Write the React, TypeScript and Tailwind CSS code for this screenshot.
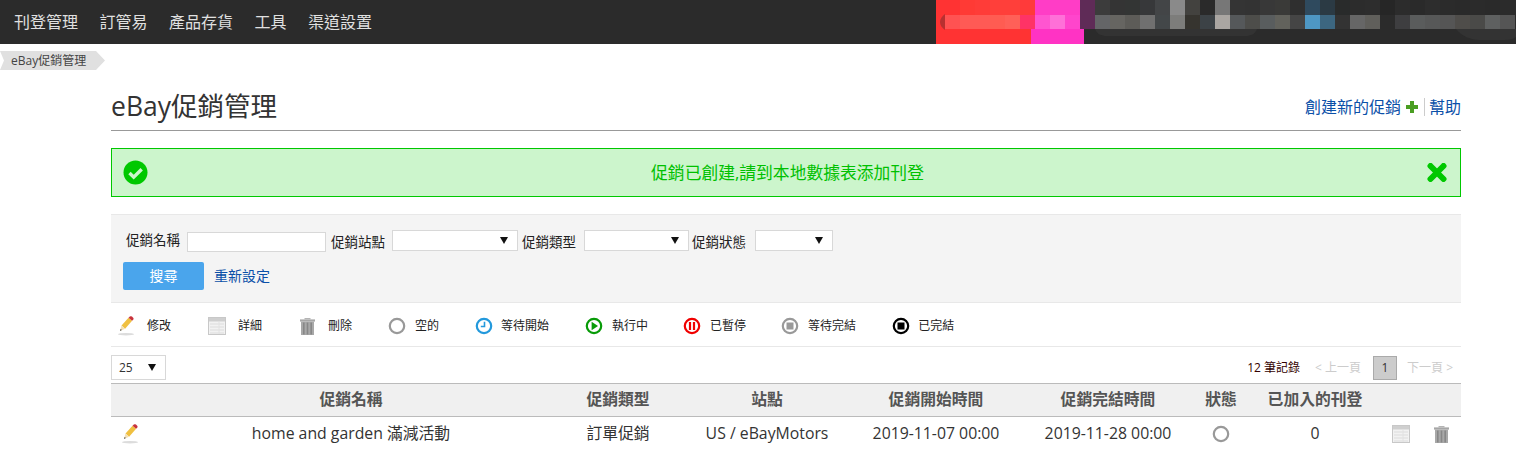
import { FC, ReactNode } from 'react';

const FONT = "font-['Open_Sans','Noto_Sans_CJK_TC',sans-serif]";

const navItems = ['刊登管理', '訂管易', '產品存貨', '工具', '渠道設置'];

// pixelated block over the account name in the top bar
const mosaicTop = ['#3c3c3c', '#343434', '#333534', '#37383a', '#434547', '#8a8a8a', '#43423f', '#2a2a2a', '#777777', '#343434', '#333333', '#383838', '#3a3a38', '#2f2f2f', '#2f4a5e', '#2b3a44', '#292b2b', '#2c2c2c', '#2d2d2d', '#262626', '#2c2c2c', '#2a2a2a', '#2d2d2d', '#2b2b2b', '#2a2a2a', '#2b2b2b', '#2a2a2a', '#2b2b2b'];
const mosaicMid = ['#646567', '#666561', '#5d5c58', '#707070', '#434749', '#7d7d7b', '#36342f', '#3c4246', '#aaa6a2', '#55585a', '#4d4d4a', '#595d5e', '#62625c', '#454545', '#4e97c4', '#3c6680', '#333333', '#666666', '#605f5b', '#2b2b2b', '#3e3e40', '#5a5c5c', '#575858', '#555555', '#4f4d4a', '#4a4a48', '#5e6060', '#555555'];
const redTop = ['#ff3333', '#ff3a35', '#ff3c38', '#ff3f3a', '#ff3f3a', '#ff3a3a'];
const redMid = ['#ff5252', '#ff5a55', '#ff5a55', '#ff5c52', '#ff6058', '#ff3366'];

const Mosaic: FC = () => (
  <svg width="580" height="44" viewBox="0 0 580 44" className="block shrink-0">
    <rect x="0" y="0" width="99" height="44" fill="#ff3333" />
    <path d="M9 15h90v14H9z" fill="#ff5252" />
    {redTop.map((c, i) => <rect key={i} x={9 + i * 15} y="0" width="15" height="15" fill={c} />)}
    {redMid.map((c, i) => <rect key={i} x={9 + i * 15} y="15" width="15" height="14" fill={c} />)}
    <path d="M9 14v16c-3-2-5-5-5-8s2-6 5-8z" fill="#b83030" />
    <rect x="95" y="29" width="53" height="15" fill="#ff33c4" />
    <rect x="99" y="0" width="45" height="15" fill="#ff3dc6" />
    <rect x="99" y="15" width="15" height="14" fill="#ff55d0" />
    <rect x="114" y="15" width="15" height="14" fill="#ff70d8" />
    <rect x="129" y="15" width="15" height="14" fill="#ff45cc" />
    <rect x="144" y="0" width="15" height="29" fill="#5f2b57" />
    <path d="M159 29h162c-2 5-6 7-12 7H171c-6 0-10-2-12-7z" fill="#333333" />
    <path d="M520 29h60v8c-2 2-6 3-12 3h-24c-10 0-18-4-24-11z" fill="#333333" />
    {mosaicTop.map((c, i) => <rect key={i} x={159 + i * 15} y="0" width="15" height="15" fill={c} />)}
    {mosaicMid.map((c, i) => <rect key={i} x={159 + i * 15} y="15" width="15" height="14" fill={c} />)}
  </svg>
);

const PencilIcon: FC = () => (
  <svg width="18" height="20" viewBox="0 0 18 20" className="block">
    <ellipse cx="8" cy="18.2" rx="8" ry="1.2" fill="#dcdcdc" />
    <path d="M3.5 9.5 10.5 1.8l3.6 3-7 7.9z" fill="#f0c040" />
    <path d="M10.5 1.8 12 .5c.6-.5 1.3-.4 1.8 0l1.4 1.2c.5.5.5 1.2.1 1.7l-1.2 1.4z" fill="#c8323c" />
    <path d="m3.5 9.5 3.6 3.2-5.1 2.3z" fill="#f3dfb4" />
    <path d="m2.6 13-.6 2 1.9-.9z" fill="#444444" />
  </svg>
);

const DetailIcon: FC = () => (
  <svg width="18" height="18" viewBox="0 0 18 18" className="block">
    <rect x="0.5" y="0.5" width="17" height="17" fill="#f2f2f2" stroke="#c8c8c8" />
    <rect x="1" y="1" width="16" height="3.5" fill="#cfcfcf" />
    <path d="M2 7h14M2 10h14M2 13h14M2 16h14" stroke="#dcdcdc" />
    <path d="M11 5v12" stroke="#e2e2e2" />
  </svg>
);

const TrashIcon: FC = () => (
  <svg width="17" height="18" viewBox="0 0 17 18" className="block">
    <path d="M1 2.4h15v2.2H1z" fill="#a6a6a6" />
    <path d="M5.5 2.4V1h6v1.4z" fill="#b4b4b4" />
    <path d="M2 4.6h13V18H2z" fill="#a8a8a8" />
    <path d="M4.8 5.5v12M8.5 5.5v12M12.2 5.5v12" stroke="#878787" strokeWidth="1.6" />
  </svg>
);

type Status = 'empty' | 'waiting' | 'running' | 'paused' | 'ending' | 'ended';

const statusColors: Record<Status, string> = {
  empty: '#999999',
  waiting: '#2399dc',
  running: '#089b08',
  paused: '#f00000',
  ending: '#999999',
  ended: '#000000',
};

const StatusIcon: FC<{ status: Status }> = ({ status }) => {
  const color = statusColors[status];
  return (
    <svg width="18" height="18" viewBox="0 0 18 18" className="block">
      <circle cx="9" cy="9" r="7.2" fill="#ffffff" stroke={color} strokeWidth="2.2" />
      {status === 'waiting' && <path d="M9.5 4.8v4.7H5.8" fill="none" stroke={color} strokeWidth="1.6" />}
      {status === 'running' && <path d="M6.6 4.8 13 9l-6.4 4.2z" fill={color} />}
      {status === 'paused' && <path d="M7 5v8M11 5v8" stroke={color} strokeWidth="2.2" />}
      {(status === 'ending' || status === 'ended') && <rect x="5.5" y="5.5" width="7" height="7" fill={color} />}
    </svg>
  );
};

const legend: { label: string; icon: ReactNode; gap: string; tail?: string }[] = [
  { label: '修改', icon: <PencilIcon />, gap: 'gap-[11px]' },
  { label: '詳細', icon: <DetailIcon />, gap: 'gap-[12px]' },
  { label: '刪除', icon: <TrashIcon />, gap: 'gap-[12px]', tail: '-mr-px' },
  { label: '空的', icon: <StatusIcon status="empty" />, gap: 'gap-[9px]', tail: '-mr-px' },
  { label: '等待開始', icon: <StatusIcon status="waiting" />, gap: 'gap-[8px]', tail: '-mr-px' },
  { label: '執行中', icon: <StatusIcon status="running" />, gap: 'gap-[9px]', tail: '-mr-[2px]' },
  { label: '已暫停', icon: <StatusIcon status="paused" />, gap: 'gap-[9px]', tail: '-mr-[2px]' },
  { label: '等待完結', icon: <StatusIcon status="ending" />, gap: 'gap-[9px]', tail: '-mr-px' },
  { label: '已完結', icon: <StatusIcon status="ended" />, gap: 'gap-[8px]' },
];

const SelectBox: FC<{ className: string; value?: string }> = ({ className, value }) => (
  <div className={`flex items-center justify-between bg-white border border-[#d8d8d8] ${className}`}>
    <span>{value}</span>
    <svg width="8" height="7" viewBox="0 0 8 7"><path d="M0 0h8L4 7z" fill="#111111" /></svg>
  </div>
);

const Label: FC<{ children: ReactNode }> = ({ children }) => (
  <span className="text-[13.5px] text-[#222] whitespace-nowrap">{children}</span>
);

const headers = ['', '促銷名稱', '促銷類型', '站點', '促銷開始時間', '促銷完結時間', '狀態', '已加入的刊登', '', ''];

const App: FC = () => {
  return (
    <div className={`${FONT} h-[451px] overflow-hidden bg-white text-[#333]`}>
      <header className="flex h-11 items-center justify-between bg-[#2b2b2b] pl-[14px]">
        <nav className="flex gap-[21.5px] text-base text-[#e0e0e0]">
          {navItems.map((item) => <a key={item}>{item}</a>)}
        </nav>
        <Mosaic />
      </header>

      <div className="mt-[7px] flex h-[19px] w-[105px] items-center bg-[#e0e0e0] pl-[11px] text-xs text-[#444] [clip-path:polygon(0_0,96px_0,105px_50%,96px_100%,0_100%,4px_50%)]">
        eBay促銷管理
      </div>

      <main className="ml-[111px] mr-[55px]">
        <div className="mt-[20px] flex h-[41px] items-center justify-between border-b border-[#999] pb-[6px]">
          <h1 className="text-[26.5px] text-[#333]">eBay促銷管理</h1>
          <div className="flex items-center text-base text-[#0b50a8]">
            <a>創建新的促銷</a>
            <svg width="12" height="12" viewBox="0 0 12 12" className="ml-[5px] mr-[6px]"><path d="M4 0h4v4h4v4H8v4H4V8H0V4h4z" fill="#4a9e22" /></svg>
            <a className="border-l border-[#ccc] pl-1 leading-[18px]">幫助</a>
          </div>
        </div>

        <div className="mt-[17px] flex h-[49px] items-center border border-[#00c800] bg-[#ccf5cc] pl-[11px] pr-[13px] text-[#00c000]">
          <svg width="25" height="25" viewBox="0 0 25 25" className="shrink-0">
            <circle cx="12.5" cy="12.5" r="12" fill="#00c800" />
            <path d="m6.5 13 4.2 4.2 8-8" fill="none" stroke="#ccf5cc" strokeWidth="3.4" />
          </svg>
          <p className="flex-1 text-center text-[16.8px]">促銷已創建,請到本地數據表添加刊登</p>
          <svg width="20" height="19" viewBox="0 0 20 19" className="shrink-0">
            <path d="M3.5 3 16.5 16M16.5 3 3.5 16" stroke="#00c800" strokeWidth="6" strokeLinecap="round" />
          </svg>
        </div>

        <section className="mt-[17px] h-[89px] border-y border-[#e8e8e8] bg-[#f4f4f4] pl-3 pt-[15px]">
          <div className="flex h-[21px] items-center pl-[3px]">
            <Label>促銷名稱</Label>
            <input className="ml-[7px] mt-[2px] h-[20px] w-[139px] border border-[#d8d8d8] bg-white" />
            <span className="ml-[5px]"><Label>促銷站點</Label></span>
            <SelectBox className="ml-[7px] h-[21px] w-[126px] pr-[9px]" />
            <span className="ml-1"><Label>促銷類型</Label></span>
            <SelectBox className="ml-[8px] h-[21px] w-[105px] pr-[9px]" />
            <span className="ml-[3px]"><Label>促銷狀態</Label></span>
            <SelectBox className="ml-[9px] h-[21px] w-[78px] pr-[9px]" />
          </div>
          <div className="mt-[11px] flex items-center">
            <button className="h-7 w-[81px] rounded-[2px] bg-[#4aa5ec] text-sm text-white">搜尋</button>
            <a className="ml-[10px] text-sm text-[#0b50a8]">重新設定</a>
          </div>
        </section>

        <section className="flex h-[44px] items-center gap-[37px] border-b border-[#e8e8e8] pl-[7px] pt-[2px] text-xs text-[#222]">
          {legend.map((item) => (
            <div key={item.label} className={`flex items-center ${item.gap}`}>
              {item.icon}
              <span className={item.tail}>{item.label}</span>
            </div>
          ))}
        </section>

        <div className="flex h-[36px] items-center justify-between pt-[5px]">
          <SelectBox className="h-[25px] w-[55px] border-[#ccc] pl-[7px] pr-[9px] text-xs" value="25" />
          <div className="flex items-center pr-2 text-xs">
            <span className="text-[#300]">12 筆記錄</span>
            <a className="ml-[15px] text-[#ccc]">&lt; 上一頁</a>
            <span className="ml-[12px] flex h-6 w-6 items-center justify-center border border-[#aaa] bg-[#ccc]">1</span>
            <a className="ml-[10px] text-[#ccc]">下一頁 &gt;</a>
          </div>
        </div>

        <table className="w-full table-fixed border-collapse text-center text-[15.8px]">
          <colgroup>
            <col className="w-10" />
            <col className="w-[400px]" />
            <col className="w-[134px]" />
            <col className="w-[164px]" />
            <col className="w-[174px]" />
            <col className="w-[170px]" />
            <col className="w-14" />
            <col className="w-[132px]" />
            <col className="w-10" />
            <col className="w-10" />
          </colgroup>
          <thead>
            <tr className="h-[33px] border-y border-[#bbb] bg-[#f0f0f0] text-[#555]">
              {headers.map((h, i) => <th key={i} className="whitespace-nowrap font-bold">{h}</th>)}
            </tr>
          </thead>
          <tbody>
            <tr className="h-[34px]">
              <td><div className="ml-[11px]"><PencilIcon /></div></td>
              <td>home and garden 滿減活動</td>
              <td>訂單促銷</td>
              <td>US / eBayMotors</td>
              <td>2019-11-07 00:00</td>
              <td>2019-11-28 00:00</td>
              <td><div className="flex justify-center"><StatusIcon status="empty" /></div></td>
              <td>0</td>
              <td><div className="flex justify-center"><DetailIcon /></div></td>
              <td><div className="flex justify-center"><TrashIcon /></div></td>
            </tr>
          </tbody>
        </table>
      </main>
    </div>
  );
};

export default App;
